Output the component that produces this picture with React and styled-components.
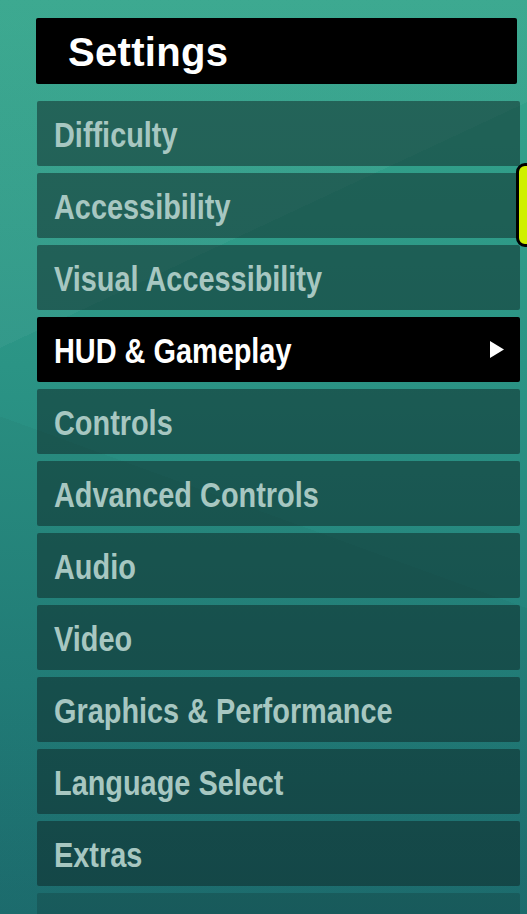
import React from 'react';
import styled, { createGlobalStyle } from 'styled-components';

const items = [
  'Difficulty',
  'Accessibility',
  'Visual Accessibility',
  'HUD & Gameplay',
  'Controls',
  'Advanced Controls',
  'Audio',
  'Video',
  'Graphics & Performance',
  'Language Select',
  'Extras',
];

const GlobalStyle = createGlobalStyle`
  html, body {
    margin: 0;
    padding: 0;
    height: 100%;
    overflow: hidden;
  }
  #root {
    height: 100%;
  }
`;

const Screen = styled.div`
  position: relative;
  height: 914px;
  overflow: hidden;
  background:
    linear-gradient(155deg, rgba(255, 255, 255, 0.04) 0 30%, transparent 30% 100%),
    linear-gradient(200deg, transparent 0 55%, rgba(0, 0, 0, 0.03) 55% 100%),
    linear-gradient(180deg, #35a68c 0%, #2b9485 40%, #227f7a 75%, #1d6e70 100%);
  font-family: 'Liberation Sans', Arial, sans-serif;
`;

const Menu = styled.div`
  display: flex;
  flex-direction: column;
  padding: 18px 7px 0 36px;
`;

const Header = styled.div`
  height: 66px;
  width: 481px;
  background: #000;
  border-radius: 2px;
  display: flex;
  align-items: center;
  padding-left: 32px;
  box-sizing: border-box;
  margin-bottom: 17px;
`;

const Title = styled.h1`
  margin: 0;
  color: #fff;
  font-size: 40px;
  font-weight: 700;
  letter-spacing: 0.3px;
  line-height: 1;
  transform: translateY(1px);
`;

const List = styled.div`
  display: flex;
  flex-direction: column;
  gap: 7px;
  margin-left: 1px;
`;

const Row = styled.div`
  height: 65px;
  border-radius: 2px;
  display: flex;
  align-items: center;
  justify-content: space-between;
  padding: 0 16px 0 17px;
  box-sizing: border-box;
  background: ${(p) => (p.$active ? '#000' : 'rgba(12, 32, 32, 0.49)')};
  opacity: ${(p) => (p.$faded ? 0.45 : 1)};
`;

const Label = styled.span`
  display: inline-block;
  font-size: 35px;
  font-weight: 700;
  color: ${(p) => (p.$active ? '#ffffff' : '#a7c7c1')};
  transform: translateY(1px) scaleX(0.825);
  transform-origin: left center;
  white-space: nowrap;
  line-height: 1;
`;

const Arrow = styled.svg`
  width: 14px;
  height: 17px;
  flex: none;
`;

const SideTab = styled.div`
  position: absolute;
  top: 163px;
  left: 516px;
  width: 30px;
  height: 78px;
  background: #cff000;
  border: 3px solid #000;
  border-radius: 9px;
`;

export default function App() {
  return (
    <>
      <GlobalStyle />
      <Screen>
        <Menu>
          <Header>
            <Title>Settings</Title>
          </Header>
          <List>
            {items.map((label) => {
              const active = label === 'HUD & Gameplay';
              return (
                <Row key={label} $active={active}>
                  <Label $active={active}>{label}</Label>
                  {active && (
                    <Arrow viewBox="0 0 14 17">
                      <polygon points="0,0 14,8.5 0,17" fill="#fff" />
                    </Arrow>
                  )}
                </Row>
              );
            })}
            <Row $faded />
          </List>
        </Menu>
        <SideTab />
      </Screen>
    </>
  );
}
